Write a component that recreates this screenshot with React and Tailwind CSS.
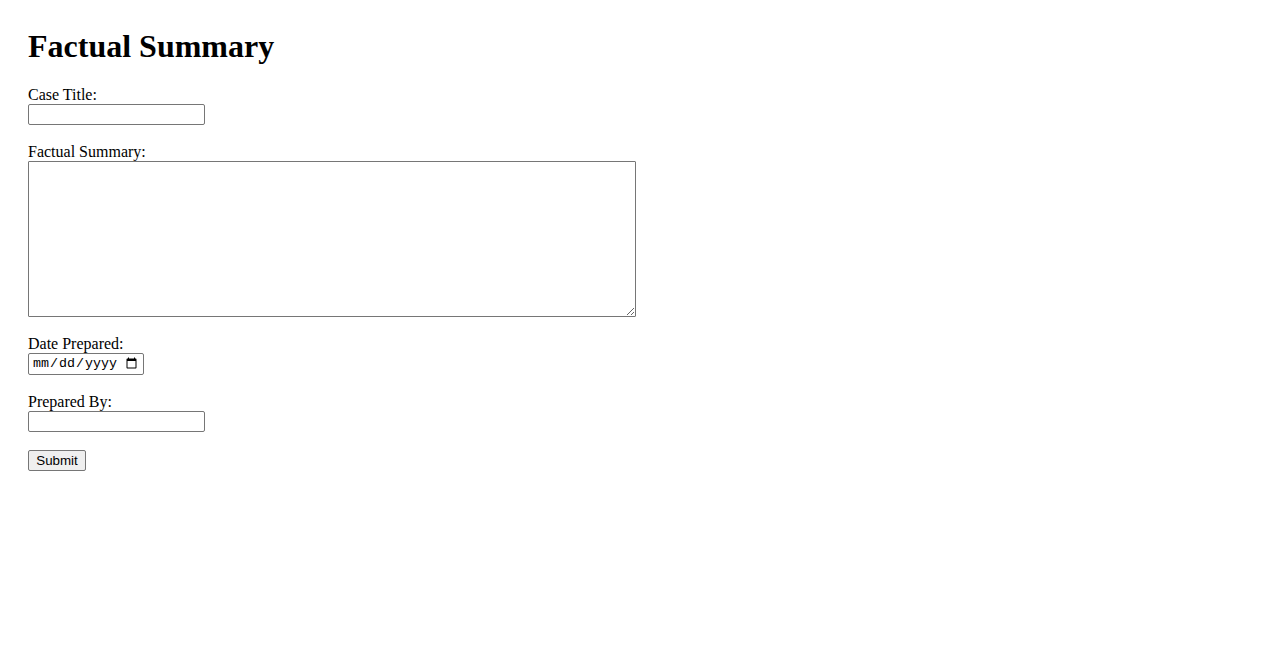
export default function App() {
  const label = "block text-[16px] leading-[18px] text-black";
  const input =
    "block w-[177px] h-[21px] border border-[#767676] rounded-[2px] px-[2px] py-[1px] text-[13.33px] bg-white outline-none";
  return (
    <div className="min-h-screen bg-white px-[28px] pt-[28px] text-black [font-family:'Liberation_Serif',serif]">
      <h1 className="text-[32px] font-bold leading-[37px] mb-[21px]">Factual Summary</h1>
      <form className="flex flex-col items-start" onSubmit={(e) => e.preventDefault()}>
        <label className={label}>Case Title:</label>
        <input type="text" className={`${input} [font-family:'Liberation_Sans',sans-serif]`} />
        <label className={`${label} mt-[18px]`}>Factual Summary:</label>
        <textarea className="block w-[608px] h-[156px] border border-[#767676] rounded-[1px] p-[2px] text-[13.33px] bg-white outline-none [font-family:'Liberation_Mono',monospace]" />
        <label className={`${label} mt-[18px]`}>Date Prepared:</label>
        <input
          type="date"
          className="block w-[116px] h-[22px] border border-[#767676] rounded-[2px] pl-[3px] pr-[3px] text-[13.33px] bg-white outline-none [font-family:'Liberation_Mono',monospace]"
        />
        <label className={`${label} mt-[18px]`}>Prepared By:</label>
        <input type="text" className={`${input} [font-family:'Liberation_Sans',sans-serif]`} />
        <button
          type="submit"
          className="block mt-[18px] w-[58px] h-[21px] border border-[#767676] rounded-[2px] bg-[#efefef] text-[13.33px] leading-[15px] text-black [font-family:'Liberation_Sans',sans-serif]"
        >
          Submit
        </button>
      </form>
    </div>
  );
}
